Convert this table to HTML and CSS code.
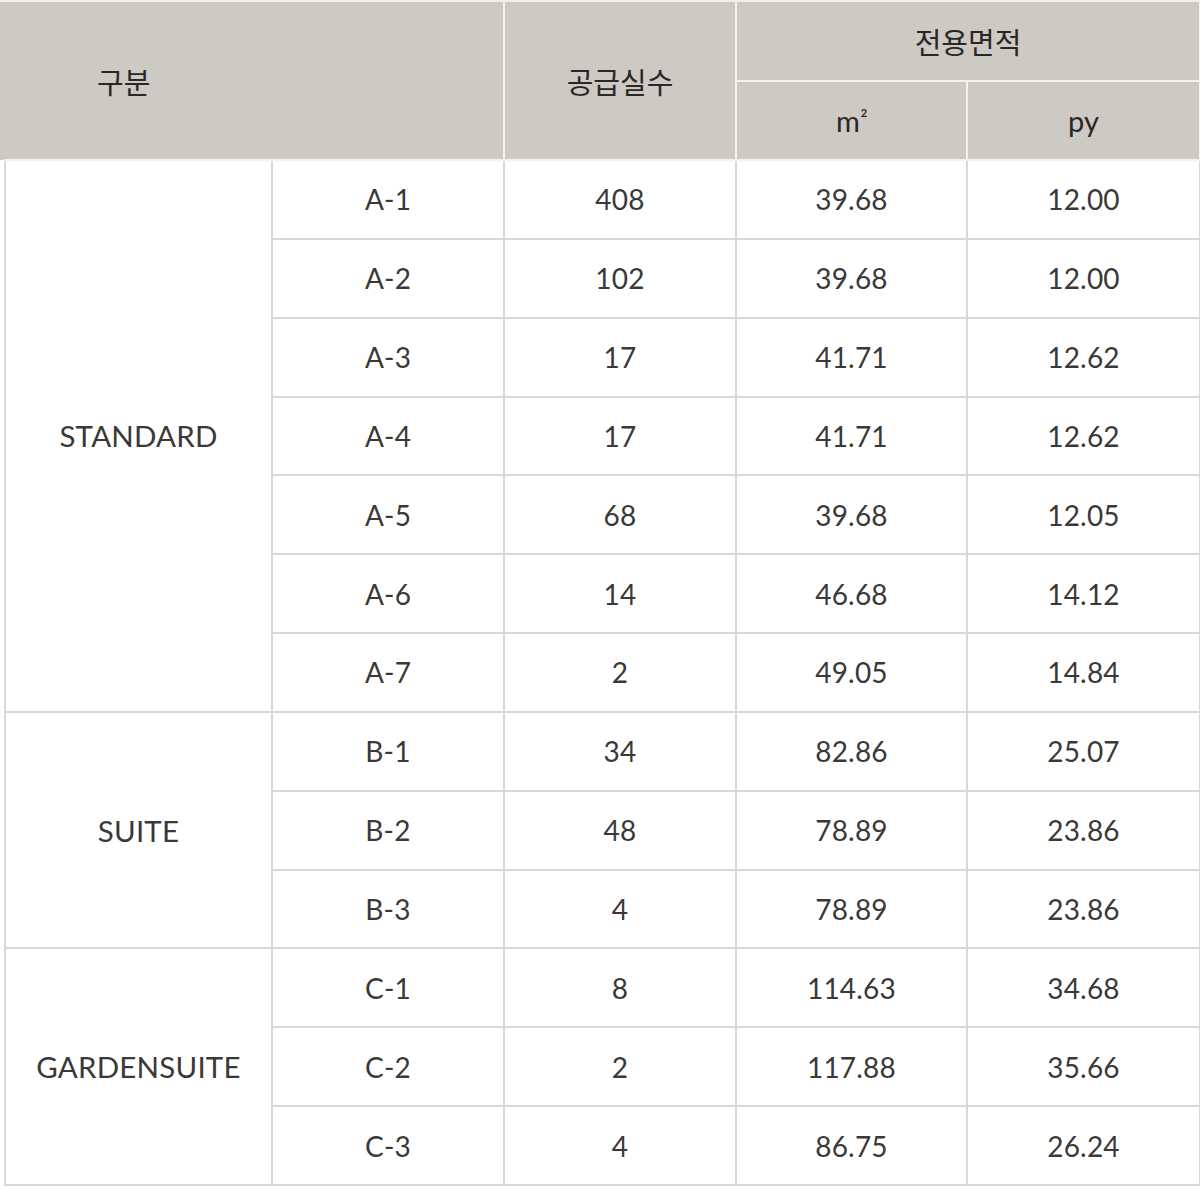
FILE: index.html
```html
<!DOCTYPE html>
<html lang="ko">
<head>
<meta charset="utf-8">
<title>Unit Table</title>
<link rel="stylesheet" href="styles.css">
</head>
<body>
<div class="wrap">
<table class="units">
  <colgroup>
    <col class="c1"><col class="c2"><col class="c3"><col class="c4"><col class="c5">
  </colgroup>
  <thead>
    <tr class="h1">
      <th colspan="2" rowspan="2" class="gubun">구분</th>
      <th rowspan="2">공급실수</th>
      <th colspan="2">전용면적</th>
    </tr>
    <tr class="h2">
      <th class="unit">m<sup>2</sup></th>
      <th class="unit">py</th>
    </tr>
  </thead>
  <tbody>
    <tr><td rowspan="7" class="grp">STANDARD</td><td>A-1</td><td>408</td><td>39.68</td><td>12.00</td></tr>
    <tr><td>A-2</td><td>102</td><td>39.68</td><td>12.00</td></tr>
    <tr><td>A-3</td><td>17</td><td>41.71</td><td>12.62</td></tr>
    <tr><td>A-4</td><td>17</td><td>41.71</td><td>12.62</td></tr>
    <tr><td>A-5</td><td>68</td><td>39.68</td><td>12.05</td></tr>
    <tr><td>A-6</td><td>14</td><td>46.68</td><td>14.12</td></tr>
    <tr><td>A-7</td><td>2</td><td>49.05</td><td>14.84</td></tr>
    <tr><td rowspan="3" class="grp">SUITE</td><td>B-1</td><td>34</td><td>82.86</td><td>25.07</td></tr>
    <tr><td>B-2</td><td>48</td><td>78.89</td><td>23.86</td></tr>
    <tr><td>B-3</td><td>4</td><td>78.89</td><td>23.86</td></tr>
    <tr><td rowspan="3" class="grp">GARDENSUITE</td><td>C-1</td><td>8</td><td>114.63</td><td>34.68</td></tr>
    <tr><td>C-2</td><td>2</td><td>117.88</td><td>35.66</td></tr>
    <tr><td>C-3</td><td>4</td><td>86.75</td><td>26.24</td></tr>
  </tbody>
</table>
</div>
</body>
</html>
```

FILE: styles.css
```css
html, body {
  margin: 0;
  padding: 0;
  background: #ffffff;
}

.wrap {
  width: 1200px;
  padding-top: 2px;
  background: linear-gradient(#f0eeeb 0, #f0eeeb 2px, #cdc9c3 2px, #cdc9c3 160px, #ffffff 160px);
}

.units {
  margin-left: 4px;
  width: 1195px;
  table-layout: fixed;
  border-collapse: collapse;
  font-family: Lato, "Noto Sans CJK KR", sans-serif;
  color: #2e2c2a;
}

.c1 { width: 267px; }
.c2 { width: 232px; }
.c3 { width: 232px; }
.c4 { width: 231px; }
.c5 { width: 233px; }

.units th {
  background: #cdc9c3;
  border: 2px solid #f4f2ef;
  font-family: "Noto Sans CJK KR", sans-serif;
  font-weight: 400;
  font-size: 29px;
  color: #2a2826;
  padding: 0;
  text-align: center;
}

.units thead tr:first-child th {
  border-top: none;
}

.units thead th.gubun {
  border-left: none;
  text-align: left;
  padding-left: 92px;
}

.units .h1 th { height: 78px; }
.units .h2 th { height: 77px; }

.units th.unit {
  font-family: Lato, sans-serif;
  font-size: 29px;
}

.units sup {
  font-size: 11px;
  vertical-align: 15px;
  margin-left: 1px;
  font-weight: 700;
}

.units td {
  border: 2px solid #d9d7d3;
  height: 76.85px;
  padding: 0;
  text-align: center;
  font-size: 28px;
  font-weight: 400;
  color: #3a3937;
  letter-spacing: 0.2px;
}

.units td.grp {
  font-size: 29.5px;
}
```
